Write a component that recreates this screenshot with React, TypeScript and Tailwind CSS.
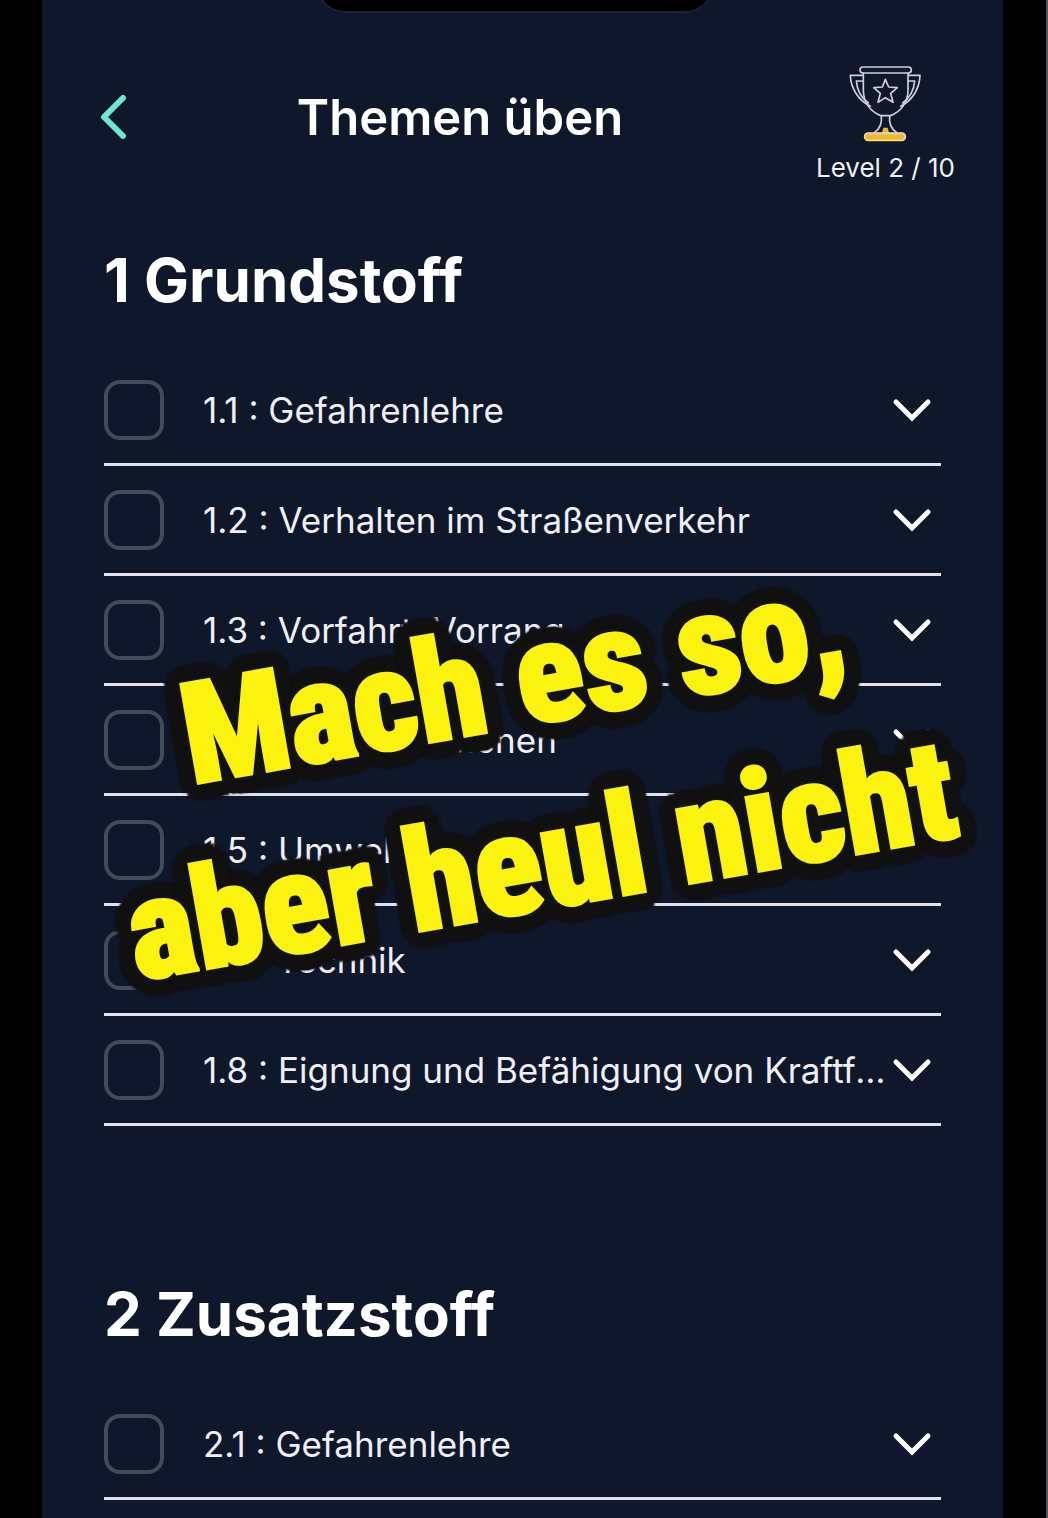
import React from "react";

type Topic = { id: string; label: string };
type Section = { title: string; topics: Topic[] };

const sections: Section[] = [
  {
    title: "1 Grundstoff",
    topics: [
      { id: "1.1", label: "Gefahrenlehre" },
      { id: "1.2", label: "Verhalten im Straßenverkehr" },
      { id: "1.3", label: "Vorfahrt, Vorrang" },
      { id: "1.4", label: "Verkehrszeichen" },
      { id: "1.5", label: "Umweltschutz" },
      { id: "1.7", label: "Technik" },
      { id: "1.8", label: "Eignung und Befähigung von Kraftfahrern" },
    ],
  },
  {
    title: "2 Zusatzstoff",
    topics: [{ id: "2.1", label: "Gefahrenlehre" }],
  },
];

function Trophy() {
  return (
    <svg
      viewBox="144 44 219 231"
      className="h-[77px] w-[73px]"
      fill="none"
      stroke="#d0cfe0"
      strokeWidth="5"
      strokeLinejoin="round"
      strokeLinecap="round"
      aria-hidden="true"
    >
      <rect x="177" y="50" width="154" height="18" rx="9" />
      <path d="M187 69V118C187 158 210 184 240 196H268C298 184 321 158 321 118V69" />
      <path d="M186 75H148C149 112 170 148 208 168M187 92H166C168 118 180 142 202 158" />
      <path d="M322 75H357C356 112 337 148 299 168M321 92H341C339 118 327 142 305 158" />
      <path d="M253 87L263 110L289 112L269 129L276 156L253 142L231 156L238 129L218 112L244 110Z" />
      <path d="M243 248L247 232H260L264 248Z" fill="#f6b91d" stroke="none" />
      <path d="M241 197C244 222 236 236 220 247M266 197C263 222 271 236 287 247" />
      <rect x="191" y="248" width="122" height="22" rx="10" fill="#f6b91d" stroke="#f8dc8e" />
      <path d="M203 250H304C312 252 314 260 309 266" />
    </svg>
  );
}

function TopicRow({ topic }: { topic: Topic }) {
  const inputId = `topic-${topic.id}`;
  return (
    <li className="flex h-[110px] items-center border-b-3 border-[#e3e2ec]">
      <input
        id={inputId}
        type="checkbox"
        className="size-[60px] shrink-0 appearance-none rounded-2xl border-4 border-[#434a5c] checked:bg-[#6ee7d0]"
      />
      <label
        htmlFor={inputId}
        className="ml-[39px] min-w-0 flex-1 truncate text-[35px] leading-[48px] text-[#f0eff7]"
      >
        {topic.id} : {topic.label}
      </label>
      <button type="button" aria-label={`${topic.label} öffnen`} className="ml-1 mr-2 shrink-0">
        <svg viewBox="0 0 42 28" className="h-7 w-[42px]" fill="none" stroke="#ffffff" strokeWidth="5" strokeLinecap="round" aria-hidden="true">
          <path d="M5 6L21 22L37 6" />
        </svg>
      </button>
    </li>
  );
}

export default function App() {
  return (
    <div className="min-h-screen border-r-2 border-[#55565a] bg-black pl-[42px] pr-[43px] font-['Inter','Liberation_Sans',sans-serif]">
      <main className="relative min-h-screen overflow-hidden bg-[#0f172a] text-white">
        <div className="absolute -top-[48px] left-[273px] h-[61px] w-[400px] rounded-[44px] border-2 border-[#1b2233] bg-black" />

        <header className="flex items-start pl-[58px] pr-12 pt-[65px]">
          <button type="button" aria-label="Zurück" className="mt-[29px] shrink-0">
            <svg viewBox="0 0 28 46" className="h-[46px] w-7" fill="none" stroke="#6ee7d0" strokeWidth="6" strokeLinecap="round" strokeLinejoin="round" aria-hidden="true">
              <path d="M23 4L4 23L23 42" />
            </svg>
          </button>
          <h1 className="mt-[21px] flex-1 pr-6 text-center text-[49px] font-semibold leading-[64px]">Themen üben</h1>
          <div className="flex shrink-0 flex-col items-center gap-2">
            <Trophy />
            <p className="text-[26px] leading-9 text-[#f0eff7]">Level 2 / 10</p>
          </div>
        </header>

        <div className="flex flex-col gap-[150px] px-[62px] pt-14">
          {sections.map((section) => (
            <section key={section.title}>
              <h2 className="pb-[38px] text-[60px] font-bold leading-[76px]">{section.title}</h2>
              <ul>
                {section.topics.map((topic) => (
                  <TopicRow key={topic.id} topic={topic} />
                ))}
              </ul>
            </section>
          ))}
        </div>

        <p className="pointer-events-none absolute left-[64px] top-[586px] -rotate-10 whitespace-nowrap font-['Roboto_Condensed',Roboto,sans-serif] text-[140px] font-extrabold leading-[184px] text-[#fbf30f] [-webkit-text-stroke:4px_#fbf30f] [text-shadow:18px_0_2px_#111,17px_7px_2px_#111,13px_13px_2px_#111,7px_17px_2px_#111,0_18px_2px_#111,-7px_17px_2px_#111,-13px_13px_2px_#111,-17px_7px_2px_#111,-18px_0_2px_#111,-17px_-7px_2px_#111,-13px_-13px_2px_#111,-7px_-17px_2px_#111,0_-18px_2px_#111,7px_-17px_2px_#111,13px_-13px_2px_#111,17px_-7px_2px_#111,8px_0_#111,-8px_0_#111,0_8px_#111,0_-8px_#111]">
          <span className="block pl-[88px]">Mach es so,</span>
          <span className="block">aber heul nicht</span>
        </p>
      </main>
    </div>
  );
}
